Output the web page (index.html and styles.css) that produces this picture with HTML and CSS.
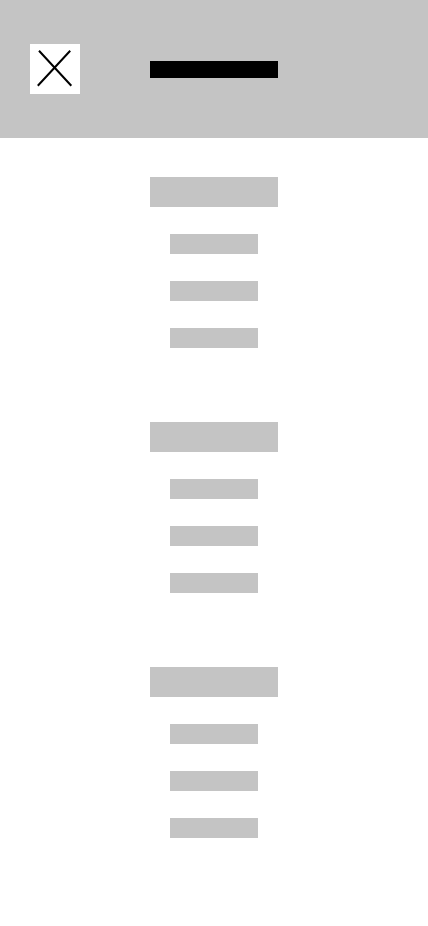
FILE: index.html
```html
<!DOCTYPE html>
<html lang="en">
<head>
  <meta charset="utf-8">
  <meta name="viewport" content="width=device-width, initial-scale=1">
  <title>Menu</title>
  <link rel="stylesheet" href="styles.css">
</head>
<body>
  <header class="header">
    <button class="close" type="button" aria-label="Close">
      <svg class="close-icon" viewBox="0 0 50 50" aria-hidden="true">
        <path d="M9 6.7L41.3 41.8M40.2 6.7L7.8 41.8"/>
      </svg>
    </button>
    <div class="title-bar"></div>
  </header>
  <main class="menu">
    <section class="group">
      <div class="group-title"></div>
      <div class="item"></div>
      <div class="item"></div>
      <div class="item"></div>
    </section>
    <section class="group">
      <div class="group-title"></div>
      <div class="item"></div>
      <div class="item"></div>
      <div class="item"></div>
    </section>
    <section class="group">
      <div class="group-title"></div>
      <div class="item"></div>
      <div class="item"></div>
      <div class="item"></div>
    </section>
  </main>
</body>
</html>
```
FILE: styles.css
```css
* {
  box-sizing: border-box;
}

body {
  margin: 0;
  background: #fff;
  font-family: "Liberation Sans", sans-serif;
}

.header {
  display: grid;
  grid-template-columns: 1fr auto 1fr;
  align-items: center;
  padding: 44px 30px;
  background: #c4c4c4;
}

.close {
  width: 50px;
  height: 50px;
  padding: 0;
  border: 0;
  background: #fff;
  cursor: pointer;
}

.close-icon {
  display: block;
  width: 100%;
  height: 100%;
  fill: none;
  stroke: #000;
  stroke-width: 2;
}

.title-bar {
  width: 128px;
  height: 17px;
  background: #000;
}

.menu {
  display: flex;
  flex-direction: column;
  gap: 74px;
  padding: 39px 30px;
}

.group {
  display: flex;
  flex-direction: column;
  align-items: center;
  gap: 27px;
}

.group-title {
  width: 128px;
  height: 30px;
  background: #c4c4c4;
}

.item {
  width: 88px;
  height: 20px;
  background: #c4c4c4;
}
```
